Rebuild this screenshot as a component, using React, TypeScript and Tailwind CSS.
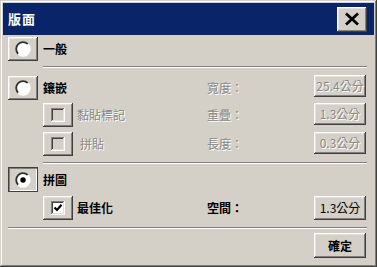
import type { ReactNode } from 'react'

const font = { fontFamily: '"Noto Sans CJK TC", "Noto Sans", sans-serif' }

const raised =
  'bg-[#d4d0c8] shadow-[inset_-1px_-1px_#404040,inset_1px_1px_#ffffff,inset_-2px_-2px_#808080,inset_2px_2px_#e4e1db]'
const pressed =
  'bg-[#d4d0c8] shadow-[inset_1px_1px_#404040,inset_-1px_-1px_#404040,inset_2px_2px_#808080,inset_-2px_-2px_#ffffff]'
const dimText = 'text-[#8a8884] [text-shadow:1px_1px_0_#ffffff]'

function RadioIcon({ on }: { on?: boolean }) {
  return (
    <svg width="16" height="16" viewBox="0 0 16 16">
      <circle cx="8" cy="8" r="6.8" fill="#ffffff" />
      <path d="M3.19 12.81 A6.8 6.8 0 0 1 12.81 3.19" fill="none" stroke="#303030" strokeWidth="1.8" />
      <path d="M12.81 3.19 A6.8 6.8 0 0 1 3.19 12.81" fill="none" stroke="#ffffff" strokeWidth="1.8" />
      {on && <circle cx="8" cy="8" r="2.7" fill="#000000" />}
    </svg>
  )
}

function CheckIcon({ on, disabled }: { on?: boolean; disabled?: boolean }) {
  return (
    <svg width="14" height="14" viewBox="0 0 14 14">
      <rect x="0" y="0" width="14" height="14" fill="#ffffff" />
      <rect x="0" y="0" width="13" height="13" fill="#808080" />
      <rect x="1" y="1" width="12" height="12" fill="#e4e1db" />
      <rect x="1" y="1" width="11" height="11" fill="#404040" />
      <rect x="2" y="2" width="10" height="10" fill={disabled ? '#d4d0c8' : '#ffffff'} />
      {on && <path d="M3.5 6.5 L6 9 L10.5 3.8" fill="none" stroke="#000000" strokeWidth="2.2" />}
    </svg>
  )
}

function OptionButton({ children, down, h = 'h-[24px]' }: { children: ReactNode; down?: boolean; h?: string }) {
  return (
    <div className={`w-[30px] ${h} flex items-center justify-center shrink-0 ${down ? pressed : raised}`}>
      {children}
    </div>
  )
}

function ValueButton({ text, disabled, h = 'h-[22px]', extra = '' }: { text: string; disabled?: boolean; h?: string; extra?: string }) {
  return (
    <div className={`w-[52px] ${h} mr-[1px] flex items-center justify-center text-[12px] ${raised} ${extra} ${disabled ? dimText : 'text-black'}`}>
      {text}
    </div>
  )
}

function Separator({ className = '' }: { className?: string }) {
  return <div className={`h-[2px] border-t border-[#808080] border-b border-b-white ${className}`} />
}

export default function App() {
  return (
    <div
      style={font}
      className="w-[377px] h-[267px] p-[3px] flex flex-col bg-[#d4d0c8] shadow-[inset_-1px_-1px_#404040,inset_1px_1px_#d4d0c8,inset_-2px_-2px_#808080,inset_2px_2px_#ffffff] overflow-hidden"
    >
      {/* title bar */}
      <div className="h-[32px] bg-[#0a246a] flex items-center justify-between pl-[5px] pr-[7px] shrink-0">
        <span className="text-white font-bold text-[13px] tracking-[1px]">版面</span>
        <div className={`w-[30px] h-[25px] flex items-center justify-center ${raised}`}>
          <svg width="16" height="14" viewBox="0 0 16 14">
            <path d="M2 1.5 L14 12.5 M14 1.5 L2 12.5" stroke="#000000" strokeWidth="2.8" />
          </svg>
        </div>
      </div>

      <div className="flex flex-col pl-[5px] pr-[7px] text-[12px]">
        {/* 一般 */}
        <div className="mt-[2px] h-[24px] flex items-center gap-[5px]">
          <OptionButton>
            <RadioIcon />
          </OptionButton>
          <span className="font-bold text-black">一般</span>
        </div>

        <Separator className="mt-[5px] ml-[35px]" />

        {/* 鑲嵌 */}
        <div className="mt-[8px] h-[24px] flex items-center">
          <div className="w-[199px] flex items-center gap-[5px]">
            <OptionButton>
              <RadioIcon />
            </OptionButton>
            <span className="font-bold text-black">鑲嵌</span>
          </div>
          <span className={`flex-1 ${dimText}`}>寬度：</span>
          <ValueButton text="25.4公分" disabled extra="self-start -mt-[1px]" />
        </div>

        <div className="mt-[3px] h-[24px] flex items-center">
          <div className="w-[199px] flex items-center gap-[4px] pl-[35px]">
            <OptionButton>
              <CheckIcon disabled />
            </OptionButton>
            <span className={dimText}>黏貼標記</span>
          </div>
          <span className={`flex-1 ${dimText}`}>重疊：</span>
          <ValueButton text="1.3公分" disabled extra="self-start" />
        </div>

        <div className="mt-[5px] h-[24px] flex items-center">
          <div className="w-[199px] flex items-center gap-[7px] pl-[35px]">
            <OptionButton>
              <CheckIcon disabled />
            </OptionButton>
            <span className={dimText}>拼貼</span>
          </div>
          <span className={`flex-1 ${dimText}`}>長度：</span>
          <ValueButton text="0.3公分" disabled extra="self-start" />
        </div>

        <Separator className="mt-[6px] ml-[35px]" />

        {/* 拼圖 */}
        <div className="mt-[3px] h-[25px] flex items-center gap-[5px]">
          <OptionButton down h="h-[25px]">
            <RadioIcon on />
          </OptionButton>
          <span className="font-bold text-black">拼圖</span>
        </div>

        <div className="mt-[4px] h-[24px] flex items-center">
          <div className="w-[199px] flex items-center gap-[4px] pl-[35px]">
            <OptionButton>
              <CheckIcon on />
            </OptionButton>
            <span className="font-bold text-black">最佳化</span>
          </div>
          <span className="flex-1 font-bold text-black">空間：</span>
          <ValueButton text="1.3公分" h="h-[24px]" />
        </div>

        <Separator className="mt-[7px]" />

        <div className="mt-[4px] flex justify-end">
          <div className={`w-[52px] h-[25px] mr-[1px] flex items-center justify-center font-bold text-black ${raised}`}>
            確定
          </div>
        </div>
      </div>
    </div>
  )
}
